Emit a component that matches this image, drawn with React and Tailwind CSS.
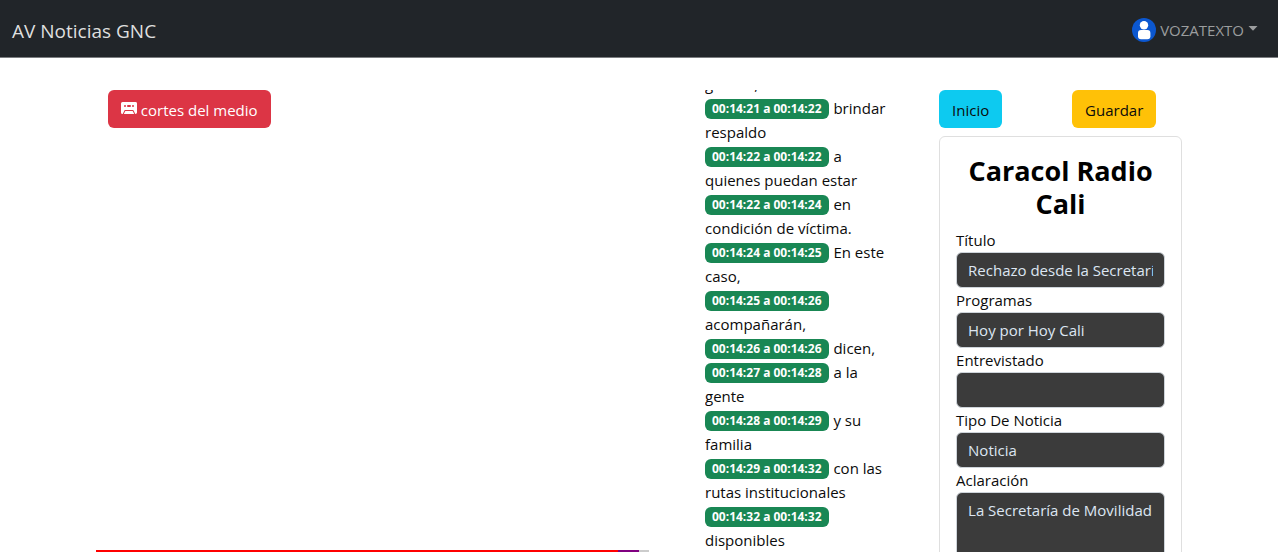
import { useLayoutEffect, useRef } from 'react';
import { BsCassetteFill } from 'react-icons/bs';

const segments = [
  { time: '', text: 'género,' },
  { time: '00:14:21 a 00:14:22', text: 'brindar respaldo' },
  { time: '00:14:22 a 00:14:22', text: 'a quienes puedan estar' },
  { time: '00:14:22 a 00:14:24', text: 'en condición de víctima.' },
  { time: '00:14:24 a 00:14:25', text: 'En este caso,' },
  { time: '00:14:25 a 00:14:26', text: 'acompañarán,' },
  { time: '00:14:26 a 00:14:26', text: 'dicen,' },
  { time: '00:14:27 a 00:14:28', text: 'a la gente' },
  { time: '00:14:28 a 00:14:29', text: 'y su familia' },
  { time: '00:14:29 a 00:14:32', text: 'con las rutas institucionales' },
  { time: '00:14:32 a 00:14:32', text: 'disponibles' },
];

const fields = [
  { id: 'titulo', label: 'Título', value: 'Rechazo desde la Secretaría' },
  { id: 'programas', label: 'Programas', value: 'Hoy por Hoy Cali' },
  { id: 'entrevistado', label: 'Entrevistado', value: '' },
  { id: 'tipo', label: 'Tipo De Noticia', value: 'Noticia' },
];

const control =
  'block w-full rounded-md border border-[#ced4da] bg-[#3b3b3b] px-[11px] text-[15px] font-medium leading-6 text-[#dde6f2]';

function Navbar() {
  return (
    <nav className="flex h-[58px] shrink-0 items-center justify-between border-b border-[#7b7d80] bg-[#212529] pl-3 pr-5 pt-1">
      <a href="#" className="text-[19px] leading-8 text-[#dedfdf]">AV Noticias GNC</a>
      <button type="button" className="flex items-center text-[15px] leading-6 text-[#9b9d9e]">
        <svg viewBox="0 0 24 24" className="mr-1 mb-[2px] size-6" aria-hidden="true">
          <circle cx="12" cy="12" r="12" fill="#0b57d0" />
          <circle cx="12" cy="7.2" r="4.2" fill="#fff" />
          <rect x="6" y="12" width="12.4" height="9.2" rx="3" fill="#fff" />
        </svg>
        <span className="mb-[2px]">VOZATEXTO</span>
        <svg viewBox="0 0 10 5" className="mb-1 ml-1 h-[5px] w-[10px]" aria-hidden="true">
          <path d="M0.5 0h9L5 4.8z" fill="currentColor" />
        </svg>
      </button>
    </nav>
  );
}

function Transcript() {
  const box = useRef(null);
  useLayoutEffect(() => {
    box.current.scrollTop = 18;
  }, []);
  return (
    <section ref={box} className="mr-[52px] overflow-y-auto pb-8 text-[15px] leading-6 [scrollbar-width:none]">
      {segments.map((s) => (
        <p key={s.time}>
          {s.time && (
            <button
              type="button"
              className="mr-px rounded-md bg-[#198754] px-[7px] align-[1px] text-xs leading-5 font-bold text-white"
            >
              {s.time}
            </button>
          )}{' '}
          {s.text}
        </p>
      ))}
    </section>
  );
}

export default function App() {
  return (
    <div className="flex h-screen flex-col overflow-hidden bg-white font-['Open_Sans','Noto_Sans',sans-serif] text-[#0b0b0b]">
      <Navbar />
      <main className="mx-auto grid min-h-0 w-[85%] flex-1 grid-cols-[609fr_234fr_243fr] grid-rows-[minmax(0,1fr)] pt-8">
        <section className="flex flex-col items-start justify-between pr-14">
          <button
            type="button"
            className="ml-3 flex h-[38px] items-center gap-1 rounded-md bg-[#dc3545] px-[13px] pt-[2px] text-[15px] leading-6 text-white"
          >
            <BsCassetteFill className="mb-1 size-4" />
            cortes del medio
          </button>
          <div className="flex h-[2px] w-full bg-[#cccccc]">
            <div className="w-[94.4%] bg-[#ff0000]" />
            <div className="w-[3.8%] bg-[#800080]" />
          </div>
        </section>

        <Transcript />

        <aside className="overflow-y-auto [scrollbar-width:none]">
          <div className="grid grid-cols-[133fr_110fr] justify-items-start text-[15px] leading-6">
            <button type="button" className="h-[38px] rounded-md bg-[#0dcaf0] px-[13px] pt-[2px]">Inicio</button>
            <button type="button" className="h-[38px] rounded-md bg-[#ffc107] px-[13px] pt-[2px]">Guardar</button>
          </div>
          <form className="mt-2 rounded-md border border-[#dfdfdf] px-4 pt-[17px] pb-4">
            <h1 className="mb-2 text-center text-[27px] leading-[33px] font-bold text-black">Caracol Radio Cali</h1>
            {fields.map((f) => (
              <div key={f.id}>
                <label htmlFor={f.id} className="block text-[15px] leading-6">{f.label}</label>
                <input id={f.id} type="text" defaultValue={f.value} className={`${control} h-9`} />
              </div>
            ))}
            <label htmlFor="aclaracion" className="block text-[15px] leading-6">Aclaración</label>
            <textarea
              id="aclaracion"
              rows={5}
              defaultValue={'La Secretaría de Movilidad'}
              className={`${control} resize-none overflow-hidden whitespace-pre py-[5px]`}
            />
          </form>
        </aside>
      </main>
    </div>
  );
}
